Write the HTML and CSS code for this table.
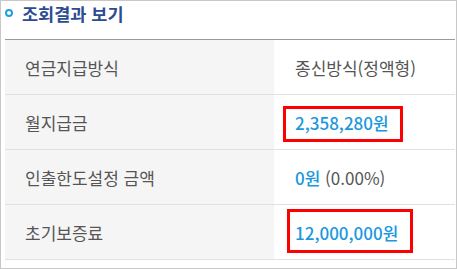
FILE: index.html
```html
<!DOCTYPE html>
<html lang="ko">
<head>
<meta charset="utf-8">
<link rel="stylesheet" href="styles.css">
</head>
<body>
<div class="frame">
  <div class="head">
    <span class="dot"></span>
    <h2 class="title">조회결과 보기</h2>
  </div>
  <div class="table">
    <div class="row">
      <div class="th">연금지급방식</div>
      <div class="td">종신방식(정액형)</div>
    </div>
    <div class="row">
      <div class="th">월지급금</div>
      <div class="td"><span class="val">2,358,280원</span><span class="mark mark-a"></span></div>
    </div>
    <div class="row">
      <div class="th">인출한도설정 금액</div>
      <div class="td"><span class="val">0원</span>&nbsp;(0.00%)</div>
    </div>
    <div class="row">
      <div class="th">초기보증료</div>
      <div class="td"><span class="val">12,000,000원</span><span class="mark mark-b"></span></div>
    </div>
  </div>
</div>
</body>
</html>
```
FILE: styles.css
```css
* { box-sizing: border-box; }
html, body { margin: 0; padding: 0; background: #fff; }
body { font-family: "Noto Sans CJK KR", "Noto Sans", sans-serif; }
.frame {
  width: 457px;
  height: 269px;
  border: 1px solid #c8c8c8;
  overflow: hidden;
}
.head {
  display: flex;
  align-items: center;
  height: 26px;
  padding-left: 4px;
  margin-bottom: 12px;
}
.dot {
  width: 8px;
  height: 8px;
  border: 2px solid #1ea0e6;
  border-radius: 50%;
  margin-right: 9px;
  margin-top: -2px;
}
.title {
  margin: 0;
  font-size: 17.5px;
  font-weight: 700;
  color: #2b4c91;
  line-height: 20px;
}
.table {
  margin-left: 4px;
  width: 450px;
  border-top: 1px solid #9a9a9a;
}
.row {
  display: flex;
  height: 55px;
  border-bottom: 1px solid #e1e1e1;
}
.th {
  width: 269px;
  background: #f5f5f5;
  display: flex;
  align-items: center;
  padding-left: 20px;
  font-size: 17px;
  color: #555;
}
.td {
  position: relative;
  flex: 1;
  display: flex;
  align-items: center;
  padding-left: 21px;
  font-size: 17px;
  color: #555;
}
.val {
  color: #1a98de;
  font-weight: 500;
}
.mark {
  position: absolute;
  border: 3px solid #f00;
}
.mark-a { left: 9px; top: 11px; width: 120px; height: 36px; }
.mark-b { left: 13px; top: 4px; width: 126px; height: 44px; }
```
